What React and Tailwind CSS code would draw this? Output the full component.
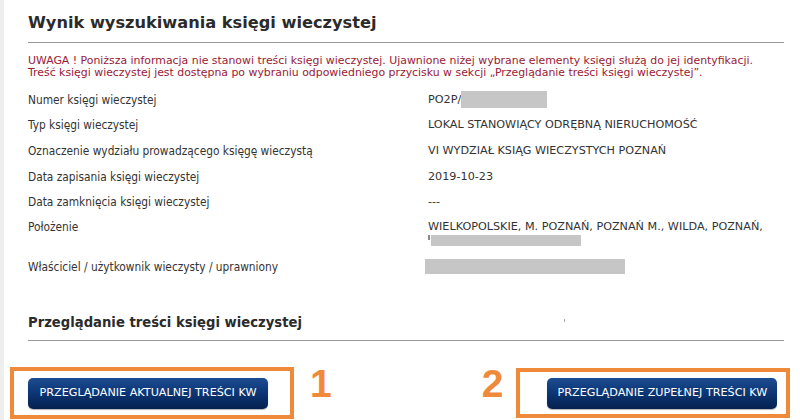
import React from "react";

const rows = [
  { label: "Numer księgi wieczystej", value: "number" },
  { label: "Typ księgi wieczystej", value: "LOKAL STANOWIĄCY ODRĘBNĄ NIERUCHOMOŚĆ" },
  { label: "Oznaczenie wydziału prowadzącego księgę wieczystą", value: "VI WYDZIAŁ KSIĄG WIECZYSTYCH POZNAŃ" },
  { label: "Data zapisania księgi wieczystej", value: "2019-10-23" },
  { label: "Data zamknięcia księgi wieczystej", value: "---" },
];

const labelFont = { fontFamily: '"DejaVu Sans Condensed", "DejaVu Sans", Verdana, sans-serif' };
const digitFont = { fontFamily: '"Liberation Sans", Arial, sans-serif' };

const KwButton = ({ children, className }) => (
  <button
    className={
      "h-[31px] rounded-[5px] bg-gradient-to-b from-[#1c4c91] via-[#0c3574] to-[#06214f] text-white text-[11.2px] shadow-[0_1px_1px_rgba(0,0,0,0.3)] " +
      className
    }
  >
    {children}
  </button>
);

export default function App() {
  return (
    <div
      className="flex w-[800px] h-[420px] overflow-hidden bg-white text-[#333]"
      style={{ fontFamily: '"DejaVu Sans", Verdana, sans-serif' }}
    >
      <div className="w-[4px] shrink-0 bg-[#eeeeee]" />
      <div className="flex-1 flex flex-col">
        <div className="pl-[24px] pr-[16px]">
          <h1 className="pt-[11px] pb-[7px] text-[16.2px] leading-[24px] font-bold text-[#2b2b2b]">
            Wynik wyszukiwania księgi wieczystej
          </h1>
          <div className="h-px bg-[#9a9a9a]" />
          <p className="mt-[12px] text-[10.9px] leading-[12px] text-[#992035]">
            UWAGA ! Poniższa informacja nie stanowi treści księgi wieczystej. Ujawnione niżej wybrane elementy księgi służą do jej identyfikacji.
            <br />
            Treść księgi wieczystej jest dostępna po wybraniu odpowiedniego przycisku w sekcji „Przeglądanie treści księgi wieczystej”.
          </p>

          <div className="mt-[8px] text-[11.2px] leading-[14px]">
            {rows.map((r) => (
              <div key={r.label} className="flex h-[25.6px] items-center">
                <div className="w-[400px] shrink-0 text-[11.8px]" style={labelFont}>{r.label}</div>
                <div className="flex items-center">
                  {r.value === "number" ? (
                    <>
                      <span>PO2P/(</span>
                      <span className="ml-[-5px] inline-block w-[86px] h-[17px] bg-[#c6c6c6]" />
                    </>
                  ) : (
                    r.value
                  )}
                </div>
              </div>
            ))}
            <div className="flex pt-[5px]">
              <div className="w-[400px] shrink-0 text-[11.8px]" style={labelFont}>Położenie</div>
              <div>
                <div>WIELKOPOLSKIE, M. POZNAŃ, POZNAŃ M., WILDA, POZNAŃ,</div>
                <div className="flex items-center h-[12px] mt-[1px]">
                  <span className="w-[2px] h-[5px] bg-[#888] self-start" />
                  <span className="ml-[1px] w-[150px] h-[11px] bg-[#c6c6c6]" />
                </div>
              </div>
            </div>
            <div className="flex items-center mt-[12px] h-[16px]">
              <div className="w-[397px] shrink-0 text-[11.8px]" style={labelFont}>Właściciel / użytkownik wieczysty / uprawniony</div>
              <span className="w-[200px] h-[15px] bg-[#c6c6c6]" />
            </div>
          </div>

          <div className="relative mt-[39px] pb-[8px]">
            <h2 className="text-[13.2px] leading-[18px] font-bold text-[#2b2b2b]">
              Przeglądanie treści księgi wieczystej
            </h2>
            <span className="absolute left-[536px] top-[5px] w-[1px] h-[3px] bg-[#aaa]" />
          </div>
          <div className="h-px bg-[#9a9a9a]" />
        </div>

        <div className="flex items-start mt-[26px] pl-[6px]">
          <div className="w-[284px] h-[52px] border-[4px] border-[#ef8a3a] pl-[14px] pt-[7px]">
            <KwButton className="w-[240px]">PRZEGLĄDANIE AKTUALNEJ TREŚCI KW</KwButton>
          </div>
          <div className="ml-[16px] mt-[-3px] text-[39px] leading-[40px] font-bold text-[#ef8a3a]" style={digitFont}>
            1
          </div>
          <div className="ml-[150px] mt-[-3px] text-[39px] leading-[40px] font-bold text-[#ef8a3a]" style={digitFont}>
            2
          </div>
          <div className="ml-[13px] mt-[1px] w-[274px] h-[50px] border-[4px] border-[#ef8a3a] pl-[27px] pt-[6px]">
            <KwButton className="w-[230px]">PRZEGLĄDANIE ZUPEŁNEJ TREŚCI KW</KwButton>
          </div>
        </div>
      </div>
    </div>
  );
}
